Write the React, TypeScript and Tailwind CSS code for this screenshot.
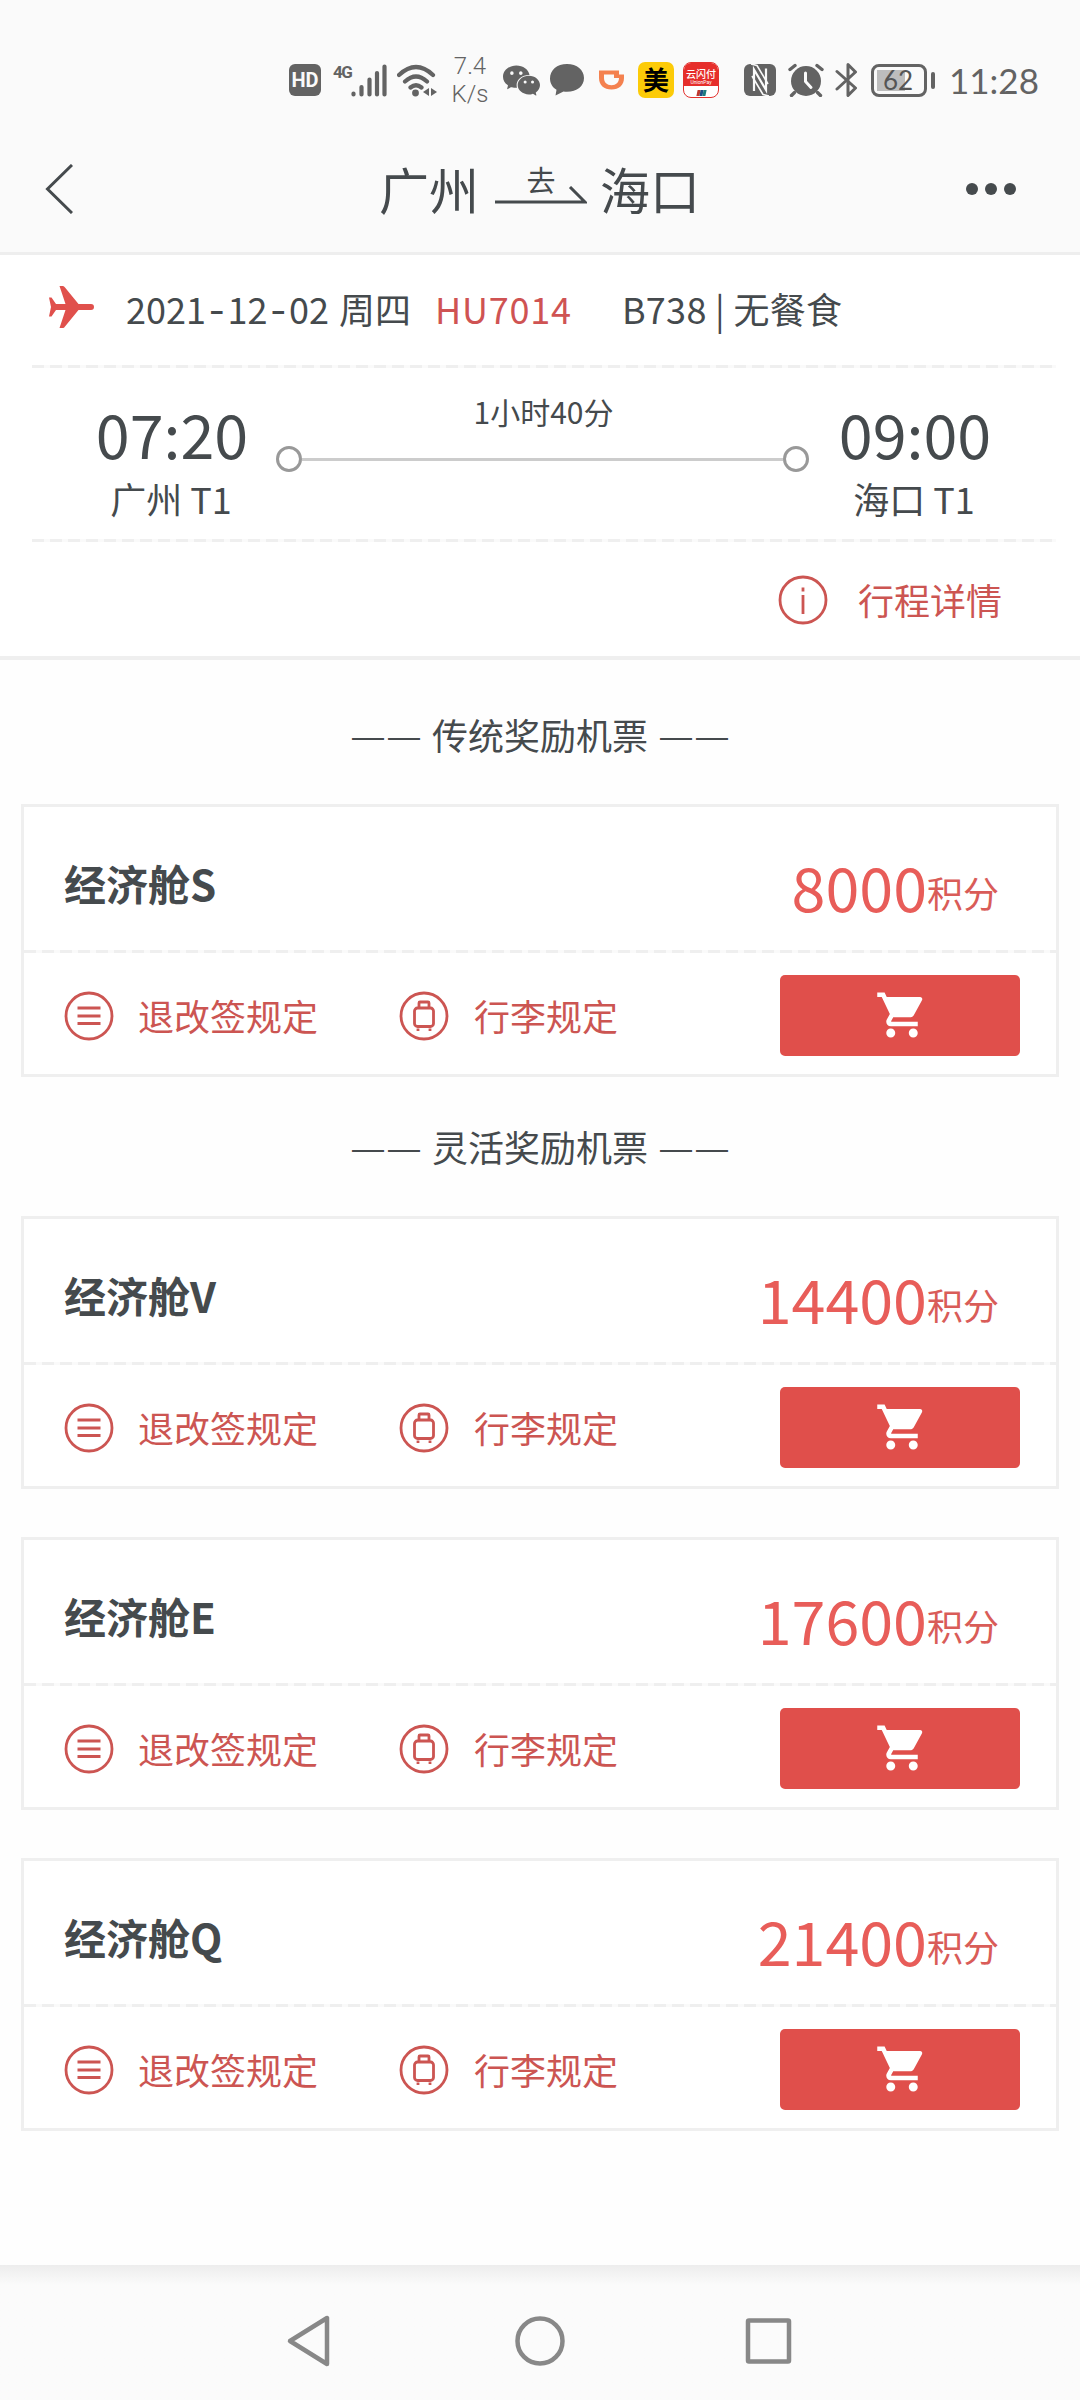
import { MdShoppingCart } from 'react-icons/md'
import { IoLogoWechat } from 'react-icons/io5'

type Fare = {
  name: string
  points: number
}

const classicFares: Fare[] = [{ name: '经济舱S', points: 8000 }]

const flexFares: Fare[] = [
  { name: '经济舱V', points: 14400 },
  { name: '经济舱E', points: 17600 },
  { name: '经济舱Q', points: 21400 },
]

function StatusBar() {
  return (
    <div className="flex h-[130px] items-center pt-[30px] pl-[289px] text-[#636363]">
      {/* HD */}
      <div className="flex h-8 w-8 items-center justify-center rounded-md bg-[#636363] font-['Roboto',sans-serif] text-[20px] leading-none font-bold text-[#fafafa]">
        HD
      </div>

      {/* Mobile signal */}
      <div className="ml-3 flex h-9 w-[54px]">
        <span className="h-4 w-[18px] font-['Roboto',sans-serif] text-[17px] leading-[20px] font-bold tracking-[-1.5px]">4G</span>
        <svg className="h-9 w-9" viewBox="18 0 36 36" stroke="#636363" strokeWidth="4.2" strokeLinecap="round">
          <path d="M20.5 31.5v1M28.5 25v7.5M36.500 17.500v15M44 11v21.500M51.500 4.500v28" />
        </svg>
      </div>

      {/* Wi-Fi */}
      <svg className="ml-[10px] h-9 w-10" viewBox="0 0 40 36" fill="none" stroke="#636363">
        <path d="M2 13Q19 -3 36 13M8 19.500Q19 9.500 30 19.500M13.500 25.500Q19 21 24.500 25.500" strokeWidth="4.200" strokeLinecap="round" />
        <circle cx="18.500" cy="31" r="3.400" fill="#636363" stroke="none" />
        <path d="M32 26v8l-6-4zM34 26v8l6-4z" fill="#636363" stroke="none" />
      </svg>

      <div className="ml-[15px] flex w-[36px] flex-col items-center font-['Roboto',sans-serif] text-[24px] leading-[28px] font-light">
        <span>7.4</span>
        <span>K/s</span>
      </div>

      <IoLogoWechat className="ml-[15px] h-[37px] w-[37px]" />

      <svg className="ml-[9px] h-[34px] w-9" viewBox="0 0 36 34" fill="#636363">
        <path d="M18 1C8 1 1 7 1 15.500c0 5 2.500 8.800 6.500 11.300L6.500 32.500l8-4c1 .2 2.300.3 3.500.3 10 0 17-5.800 17-13.800S28 1 18 1z" />
      </svg>

      <svg className="ml-[13px] h-[22px] w-[27px]" viewBox="0 0 27 22" fill="#f4814f" fillRule="evenodd">
        <path d="M1 1.500h20v4h5V9c0 7-5 11.500-12.500 11.500S1 16 1 9zM6 5.500V9c0 4.500 3 7.200 7.500 7.200S21 13.500 21 9H16V5.500z" />
      </svg>

      <div className="ml-[13px] flex h-9 w-9 items-center justify-center rounded-[7px] bg-[#fccb08] text-[26px] leading-none font-bold text-black">
        <span className="mb-[3px]">美</span>
      </div>

      {/* UnionPay */}
      <div className="ml-[9px] flex h-9 w-9 flex-col items-center overflow-hidden rounded-[8px] border border-[#e3312e] bg-white">
        <div className="flex h-[23px] w-full shrink-0 flex-col items-center bg-[#e62e2b] pt-[5px] text-white">
          <span className="text-[10px] leading-[11px] font-medium whitespace-nowrap">云闪付</span>
          <span className="font-['Roboto',sans-serif] text-[5px] leading-[6px]">UnionPay</span>
        </div>
        <div className="mt-[4px] flex h-[6px] -skew-x-12">
          <span className="w-[3px] bg-[#c0392f]" />
          <span className="w-[3px] bg-[#1f4f86]" />
          <span className="w-[3px] bg-[#1c7b80]" />
        </div>
      </div>

      {/* NFC */}
      <svg className="ml-[25px] h-8 w-8" viewBox="0 0 32 32">
        <rect width="32" height="32" rx="6" fill="#636363" />
        <path d="M10 27V5.500L22 26V4.500" fill="none" stroke="#fafafa" strokeWidth="2.200" />
        <path d="M7 0l6 1.500L24 20M25 32l-6-1.500L8 12" fill="none" stroke="#fafafa" strokeWidth="1.600" />
      </svg>

      {/* Alarm */}
      <svg className="ml-3 h-[34px] w-9" viewBox="0 0 36 34">
        <circle cx="18" cy="18" r="15" fill="#636363" />
        <path d="M2 6.500l5-4M34 6.500l-5-4M6.500 29.500l-3 3M29.500 29.500l3 3" stroke="#636363" strokeWidth="3.400" strokeLinecap="round" />
        <path d="M17.500 10v8.500l5.500 6" fill="none" stroke="#fafafa" strokeWidth="3" strokeLinecap="round" />
      </svg>

      {/* Bluetooth */}
      <svg className="ml-[11px] h-9 w-6" viewBox="0 0 24 36" fill="none" stroke="#636363" strokeWidth="3" strokeLinejoin="round" strokeLinecap="round">
        <path d="M2 9.500L20.500 26 13 33.500V2.500L20.500 10 2 27" />
      </svg>

      {/* Battery */}
      <div className="ml-[12px] flex h-[33px] w-[56px] rounded-[8px] border-[3px] border-[#636363] p-[3px]">
        <div className="flex h-full w-[28px] items-center bg-[#bdbdbd] pl-[6px]">
          <span className="font-['Lato',sans-serif] text-[26px] leading-none text-[#555]">62</span>
        </div>
      </div>
      <div className="ml-1 h-[17px] w-1 rounded-sm bg-[#636363]" />

      <span className="ml-[14px] font-['Lato',sans-serif] text-[35px] leading-none">11:28</span>
    </div>
  )
}

function Header() {
  return (
    <header className="flex h-[125px] items-center border-b-[3px] border-[#eeeeee] pl-[45px]">
      <svg className="mb-[4px] h-[50px] w-[28px]" viewBox="0 0 28 50" fill="none" stroke="#454a4d" strokeWidth="3">
        <path d="M27 1L2.500 25 27 49" />
      </svg>

      <h1 className="mb-[6px] ml-[306px] flex items-center text-[50px] leading-none">
        <span>广州</span>
        <span className="mr-[13px] ml-[16px] flex w-[92px] flex-col items-center">
          <span className="-mt-[7px] text-[29px] leading-[29px]">去</span>
          <svg className="-mt-[8px] h-[18px] w-[92px]" viewBox="0 0 92 18" fill="none" stroke="#454a4d" strokeWidth="3">
            <path d="M0 16h90L75 1" />
          </svg>
        </span>
        <span>海口</span>
      </h1>

      <div className="mb-[4px] ml-[266px] flex gap-[7px]">
        <span className="h-3 w-3 rounded-full bg-[#454a4d]" />
        <span className="h-3 w-3 rounded-full bg-[#454a4d]" />
        <span className="h-3 w-3 rounded-full bg-[#454a4d]" />
      </div>
    </header>
  )
}

function DashedLine() {
  return <div className="h-[3px] bg-[repeating-linear-gradient(90deg,#efefef_0_12px,#fafafa_12px_18px)]" />
}

function PlaneIcon() {
  return (
    <svg className="mb-[6px] h-[42px] w-[46px]" viewBox="0 0 46 42" fill="#e0504c">
      <path d="M10.500 0h3.500q1 0 2 1.500L29.500 18H42a3 3 0 0 1 0 6H29.500L16 40.500q-1 1.500-2 1.500h-3.500L16.500 24H7l-4.500 6.500H0L2 21 0 11.500h2.500L7 18h9.500z" />
    </svg>
  )
}

function Stop({ time, place }: { time: string; place: string }) {
  return (
    <div className="flex w-[160px] flex-col items-center">
      <span className="text-[61px] leading-[62px]">{time}</span>
      <span className="mt-[16px] mr-[2px] text-[36px] leading-[36px]">{place}</span>
    </div>
  )
}

function FlightSummary() {
  return (
    <section className="border-b-[4px] border-[#efefef] bg-white">
      <div className="pr-6 pl-8">
        <div className="flex h-[110px] items-center pl-[17px] text-[36px] leading-none">
          <PlaneIcon />
          <span className="mb-[2px] ml-[31px] flex">
            <span>
              2021<span className="px-[2.5px] font-['Inter',sans-serif]">-</span>12
              <span className="px-[2.5px] font-['Inter',sans-serif]">-</span>02
            </span>
            <span className="ml-[10px]">周四</span>
            <span className="ml-[24px] tracking-[0.8px] text-[#cf5353]">HU7014</span>
            <span className="ml-[50px] tracking-[0.3px]">B738 | 无餐食</span>
          </span>
        </div>
        <DashedLine />

        <div className="flex h-[171px] items-start pt-[34px] pl-[60px]">
          <Stop time="07:20" place="广州 T1" />
          <div className="ml-[24px] flex w-[533px] flex-col items-center">
            <span className="-mt-[6px] ml-[2px] text-[30px] leading-[31px]">1小时40分</span>
            <div className="mt-[19px] flex w-full items-center">
              <span className="h-[26px] w-[26px] rounded-full border-[3px] border-[#999999]" />
              <span className="h-[3px] flex-1 bg-[#cccccc]" />
              <span className="h-[26px] w-[26px] rounded-full border-[3px] border-[#999999]" />
            </div>
          </div>
          <div className="ml-[26px]">
            <Stop time="09:00" place="海口 T1" />
          </div>
        </div>
        <DashedLine />

        <div className="flex h-[114px] items-center justify-end pr-[54px] text-[#cc5552]">
          <svg className="mt-[2px] h-[50px] w-[50px]" viewBox="0 0 50 50" fill="none" stroke="currentColor" strokeWidth="2.800">
            <circle cx="25" cy="25" r="23" />
            <path d="M25 20v19M25 12.500v4" />
          </svg>
          <span className="ml-[30px] text-[36px] leading-none">行程详情</span>
        </div>
      </div>
    </section>
  )
}

function TitleDash() {
  return <span className="mb-[3px] font-['Liberation_Sans',sans-serif] text-[32px] leading-none tracking-[4px]">——</span>
}

function SectionTitle({ children }: { children: string }) {
  return (
    <h2 className="flex h-[36px] items-center pl-[352px] text-[36px] leading-none">
      <TitleDash />
      <span className="mr-[12px] mb-[6px] ml-[8px]">{children}</span>
      <TitleDash />
    </h2>
  )
}

function RulesIcon() {
  return (
    <svg className="mt-[3px] h-[50px] w-[50px]" viewBox="0 0 50 50" fill="none" stroke="currentColor" strokeWidth="2.800">
      <circle cx="25" cy="25" r="23" />
      <path d="M13.500 17h23M13.500 25h23M13.500 32.500h23" />
    </svg>
  )
}

function LuggageIcon() {
  return (
    <svg className="mt-[3px] h-[50px] w-[50px]" viewBox="0 0 50 50" fill="none" stroke="currentColor" strokeWidth="2.800">
      <circle cx="25" cy="25" r="23" />
      <rect x="15.500" y="17" width="19" height="18.500" rx="3" />
      <path d="M20 17v-5q0-1 1-1h8q1 0 1 1v5M19 37.500v2.500M31 37.500v2.500" />
    </svg>
  )
}

function FareCard({ fare }: { fare: Fare }) {
  return (
    <article className="mx-[21px] border-[3px] border-[#efefef] bg-white">
      <div className="flex h-[143px] items-center justify-between pr-[57px] pl-10">
        <span className="mt-[9px] text-[42px] leading-none font-bold">{fare.name}</span>
        <span className="mt-[13px] flex items-end text-[#e85d59]">
          <span className="text-[61px] leading-none">{fare.points}</span>
          <span className="mb-[6px] text-[36px] leading-none text-[#d95c58]">积分</span>
        </span>
      </div>
      <DashedLine />
      <div className="flex h-[121px] items-center pt-px pl-[40px] text-[36px] leading-none text-[#cc5552]">
        <RulesIcon />
        <span className="mt-px ml-[24px]">退改签规定</span>
        <div className="ml-[81px] flex items-center">
          <LuggageIcon />
          <span className="mt-px ml-[25px]">行李规定</span>
        </div>
        <button className="mt-[2px] mr-[36px] ml-auto flex h-[81px] w-[240px] items-center justify-center rounded-[5px] bg-[#e04f4b]">
          <MdShoppingCart className="ml-[3px] h-[54px] w-[54px] text-white" />
        </button>
      </div>
    </article>
  )
}

function NavBar() {
  return (
    <nav className="flex h-[135px] items-center justify-center bg-gradient-to-b from-[#ededed] via-[#fbfbfb] via-15% to-[#fbfbfb] pt-[16px]">
      <svg className="h-[54px] w-[512px]" viewBox="0 0 512 54" fill="none" stroke="#888888" strokeWidth="4.500" strokeLinejoin="round">
        <path d="M43 4v46L6 27z" />
        <circle cx="256" cy="27" r="22.500" />
        <rect x="464" y="6.500" width="41" height="41" rx="1" />
      </svg>
    </nav>
  )
}

export default function App() {
  return (
    <div className="flex h-[2400px] w-[1080px] flex-col overflow-hidden bg-[#fefefe] font-['Noto_Sans_CJK_SC',sans-serif] text-[#454a4d]">
      <div className="bg-[#fafafa]">
        <StatusBar />
        <Header />
      </div>
      <FlightSummary />

      <main className="flex-1 pt-[59px]">
        <SectionTitle>传统奖励机票</SectionTitle>
        <div className="mt-[49px] flex flex-col gap-12">
          {classicFares.map((fare) => (
            <FareCard key={fare.name} fare={fare} />
          ))}
        </div>

        <div className="mt-[54px]">
          <SectionTitle>灵活奖励机票</SectionTitle>
        </div>
        <div className="mt-[49px] flex flex-col gap-12">
          {flexFares.map((fare) => (
            <FareCard key={fare.name} fare={fare} />
          ))}
        </div>
      </main>

      <NavBar />
    </div>
  )
}
